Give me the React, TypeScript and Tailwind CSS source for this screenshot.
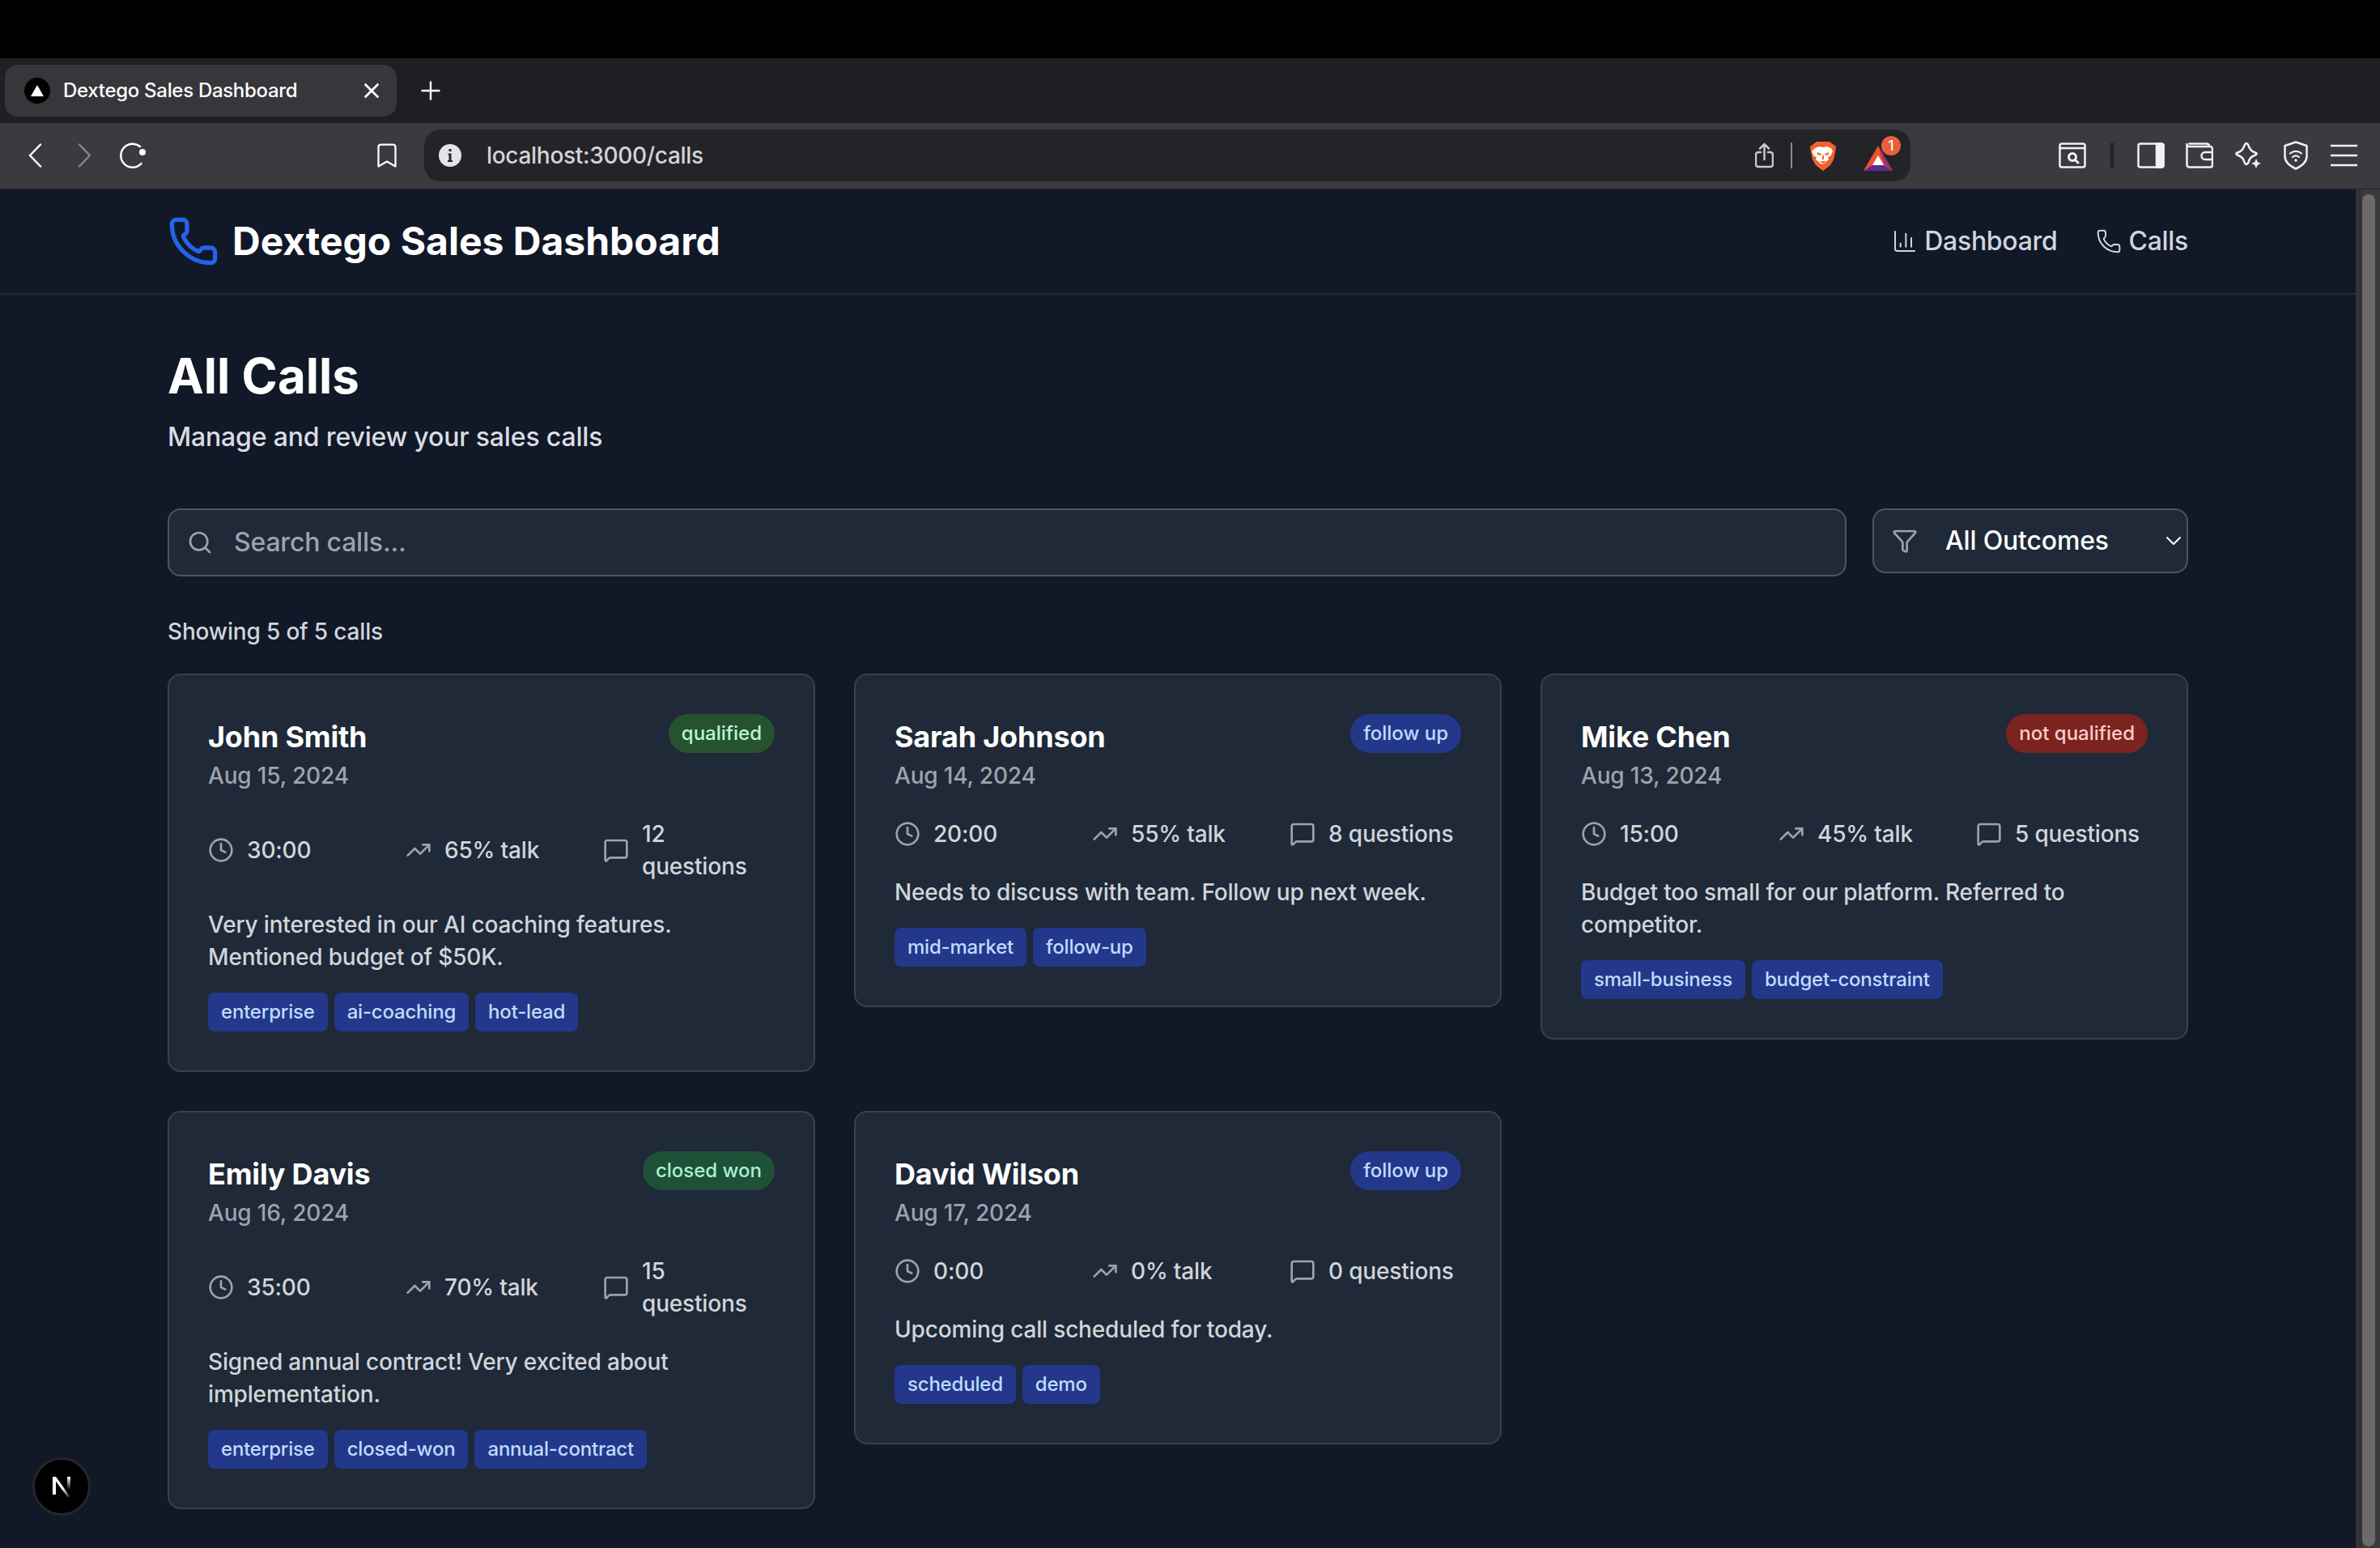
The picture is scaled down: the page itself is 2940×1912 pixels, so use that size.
import React from "react";
import { Phone, ChartColumn, Clock, TrendingUp, MessageSquare, Search, Filter, ChevronDown, X, Plus, Bookmark } from "lucide-react";

type Call = { name: string; date: string; badge: string; badgeCls: string; dur: string; talk: string; q: string; note: string; tags: string[] };

const BLUE = "bg-[#23388a] text-[#bfdbfe]";
const calls: Call[] = [
  { name: "John Smith", date: "Aug 15, 2024", badge: "qualified", badgeCls: "bg-[#265230] text-[#bbf7d0]", dur: "30:00", talk: "65% talk", q: "12 questions", note: "Very interested in our AI coaching features. Mentioned budget of $50K.", tags: ["enterprise", "ai-coaching", "hot-lead"] },
  { name: "Sarah Johnson", date: "Aug 14, 2024", badge: "follow up", badgeCls: BLUE, dur: "20:00", talk: "55% talk", q: "8 questions", note: "Needs to discuss with team. Follow up next week.", tags: ["mid-market", "follow-up"] },
  { name: "Mike Chen", date: "Aug 13, 2024", badge: "not qualified", badgeCls: "bg-[#7a2320] text-[#fecaca]", dur: "15:00", talk: "45% talk", q: "5 questions", note: "Budget too small for our platform. Referred to competitor.", tags: ["small-business", "budget-constraint"] },
  { name: "Emily Davis", date: "Aug 16, 2024", badge: "closed won", badgeCls: "bg-[#1f5038] text-[#a7f3d0]", dur: "35:00", talk: "70% talk", q: "15 questions", note: "Signed annual contract! Very excited about implementation.", tags: ["enterprise", "closed-won", "annual-contract"] },
  { name: "David Wilson", date: "Aug 17, 2024", badge: "follow up", badgeCls: BLUE, dur: "0:00", talk: "0% talk", q: "0 questions", note: "Upcoming call scheduled for today.", tags: ["scheduled", "demo"] },
];

function Card({ c }: { c: Call }) {
  return (
    <div className="w-[800px] rounded-[16px] border-2 border-[#374151] bg-[#1f2937] p-[48px]">
      <div className="mb-[32px] flex items-start justify-between">
        <div>
          <div className="text-[36px] leading-[56px] font-[650] tracking-[-0.2px] text-white">{c.name}</div>
          <div className="text-[28px] leading-[40px] font-[450] tracking-[-0.17px] text-[#9ca3af]">{c.date}</div>
        </div>
        <span className={`rounded-full px-[16px] py-[8px] text-[24px] leading-[32px] font-[550] ${c.badgeCls}`}>{c.badge}</span>
      </div>
      <div className="mb-[32px] grid grid-cols-3 gap-[32px] text-[28px] leading-[40px] font-[450] tracking-[-0.17px] text-[#d1d5db]">
        <div className="flex items-center gap-[16px]"><Clock className="h-[32px] w-[32px] shrink-0 text-[#9ca3af]" /><span>{c.dur}</span></div>
        <div className="flex items-center gap-[16px]"><TrendingUp className="h-[32px] w-[32px] shrink-0 text-[#9ca3af]" /><span>{c.talk}</span></div>
        <div className="flex items-center gap-[16px]"><MessageSquare className="h-[32px] w-[32px] shrink-0 text-[#9ca3af]" /><span>{c.q}</span></div>
      </div>
      <p className="mb-[24px] text-[28px] leading-[40px] font-[450] tracking-[-0.17px] text-[#d1d5db]">{c.note}</p>
      <div className="flex flex-wrap gap-[8px]">
        {c.tags.map((t) => (
          <span key={t} className={`rounded-[8px] px-[16px] py-[8px] text-[24px] leading-[32px] font-[450] tracking-[-0.2px] ${BLUE}`}>{t}</span>
        ))}
      </div>
    </div>
  );
}

function BraveLion() {
  return (
    <svg width="32" height="37" viewBox="0 0 32 37" className="block">
      <path d="M8 1h16l4 3 4 3-1 7-2 9-4 7-9 7-9-7-4-7-2-9-1-7 4-3z" fill="#f0632b" />
      <path d="M6 9l5-2 5 1 5-1 5 2 2 4-3 6-3 1 1 3-6 5-2 1-2-1-6-5 1-3-3-1-3-6z" fill="#fff" />
      <path d="M9 14l5 2-1 2-4-1zM23 14l-5 2 1 2 4-1zM12 25h8l-4 3zM15 18h2v5h-2z" fill="#f0632b" />
    </svg>
  );
}

function BatLogo() {
  return (
    <svg width="36" height="32" viewBox="0 0 36 32" className="absolute left-0 top-[8px] block">
      <path d="M18 0 36 31H0z" fill="#e8552f" />
      <path d="M18 0 36 31 26 24z" fill="#a32f6d" />
      <path d="M0 31 11 24h14l11 7z" fill="#5f2a8f" />
      <path d="M18 12l7 12H11z" fill="#fff" />
    </svg>
  );
}

const st = { fill: "none", stroke: "#f1f1f3", strokeWidth: 2.5, strokeLinejoin: "round" as const, strokeLinecap: "round" as const };

export default function App() {
  return (
    <div className="flex h-[1912px] w-[2940px] flex-col overflow-hidden bg-black font-['Inter',sans-serif]">
      <div className="h-[72px] shrink-0 bg-black" />
      {/* tab strip */}
      <div className="flex h-[80px] shrink-0 items-center bg-[#1f1f23] pl-[6px]">
        <div className="flex h-[64px] w-[484px] items-center rounded-[16px] bg-[#36363b] pl-[24px] pr-[16px]">
          <span className="flex h-[32px] w-[32px] items-center justify-center rounded-full bg-black">
            <svg width="16" height="14" viewBox="0 0 16 14"><path d="M8 0l8 14H0z" fill="#fff" /></svg>
          </span>
          <span className="ml-[16px] flex-1 text-[24px] leading-[32px] font-[450] tracking-[-0.3px] text-white">Dextego Sales Dashboard</span>
          <X className="h-[30px] w-[30px] text-white" strokeWidth={2.2} />
        </div>
        <Plus className="ml-[24px] h-[36px] w-[36px] text-white" strokeWidth={1.6} />
      </div>
      {/* toolbar */}
      <div className="flex h-[82px] shrink-0 items-center border-b-2 border-[#2e2e32] bg-[#3a3a3f]">
        <svg width="17" height="30" viewBox="0 0 17 30" className="ml-[35px] block" {...st} stroke="#fff"><path d="M15 1.500 2 15l13 13.500" /></svg>
        <svg width="17" height="30" viewBox="0 0 17 30" className="ml-[44px] block" {...st} stroke="#85858a"><path d="M2 1.500 15 15 2 28.500" /></svg>
        <svg width="34" height="34" viewBox="0 0 34 34" className="ml-[34px] block" {...st} stroke="#fff"><path d="M26 6A14.500 14.500 0 1 0 27.500 27" /><circle cx="29" cy="13" r="4" fill="#fff" stroke="none" /></svg>
        <Bookmark className="ml-[279px] h-[36px] w-[36px] text-white" strokeWidth={1.5} />
        <div className="ml-[28px] flex h-[64px] w-[1836px] items-center rounded-[20px] bg-[#242428] pl-[18px] pr-[22px]">
          <svg width="28" height="28" viewBox="0 0 28 28" className="block shrink-0">
            <circle cx="14" cy="14" r="14" fill="#e3e3e8" />
            <path d="M12.500 6h3v3h-3zM11.500 11.500h4V20h1.500v2h-6v-2h1.500v-6.500h-1z" fill="#242428" />
          </svg>
          <span className="ml-[31px] flex-1 text-[28px] leading-[36px] font-[450] tracking-[-0.3px] text-[#d4d4d8]">localhost:3000/calls</span>
          <svg width="23" height="32" viewBox="0 0 23 32" className="block" {...st} stroke="#c8c8cc"><path d="M7 12H4a3 3 0 0 0-3 3v12a3 3 0 0 0 3 3h15a3 3 0 0 0 3-3V15a3 3 0 0 0-3-3h-3" /><path d="M11.500 21V2M6 7.500 11.500 2 17 7.500" /></svg>
          <span className="ml-[21px] h-[32px] w-[2px] bg-[#8a8a8e]" />
          <span className="ml-[22px]"><BraveLion /></span>
          <span className="relative ml-[34px] h-[40px] w-[36px]">
            <BatLogo />
            <span className="absolute -right-[10px] -top-[4px] flex h-[24px] w-[24px] items-center justify-center rounded-full bg-[#e9603a] text-[17px] leading-[17px] font-medium text-white">1</span>
          </span>
        </div>
        <svg width="34" height="32" viewBox="0 0 34 32" className="ml-[183px] block" {...st}>
          <rect x="1.500" y="1.500" width="31" height="29" rx="2.500" /><path d="M1.500 7h31" /><circle cx="17" cy="18" r="4.500" strokeWidth="3" /><path d="M21 22l3 3" strokeWidth="3" />
        </svg>
        <span className="ml-[30px] h-[32px] w-[4px] rounded bg-[#232327]" />
        <svg width="34" height="32" viewBox="0 0 34 32" className="ml-[29px] block" {...st}>
          <rect x="1.500" y="1.500" width="31" height="29" rx="2.500" /><path d="M24 1.500h6a2.500 2.500 0 0 1 2.500 2.500v24a2.500 2.500 0 0 1-2.500 2.500h-6z" fill="#f1f1f3" />
        </svg>
        <svg width="34" height="32" viewBox="0 0 34 32" className="ml-[26px] block" {...st}>
          <path d="M4.500 1.500h21a4 4 0 0 1 4 3.500M1.500 5v22.500a3 3 0 0 0 3 3h26a2.500 2.500 0 0 0 2.500-2.500V8a3 3 0 0 0-3-3H4.500a3 3 0 0 1-3-3z" /><path d="M33 12H24a4.500 4.500 0 0 0 0 9h9" />
        </svg>
        <svg width="34" height="34" viewBox="0 0 34 34" className="ml-[26px] block" {...st}>
          <path d="M15 2c1.500 0 2 1.500 3 4 1.500 4 3.500 6 8 7.500 2 .8 2.500 1.800 0 3-4.500 1.500-7 3.500-8 7.500-1 2.500-1.500 4-3 4s-2-1.500-3-4c-1-4-3.500-6-8-7.500-2.500-1.200-2-2.200 0-3 4.500-1.500 6.500-3.500 8-7.500 1-2.500 1.500-4 3-4z" />
          <path d="M27 21l1.800 4.200 4.200 1.800-4.200 1.800L27 33l-1.800-4.200-4.200-1.800 4.200-1.800z" fill="#f1f1f3" stroke="none" />
        </svg>
        <svg width="30" height="36" viewBox="0 0 30 36" className="ml-[27px] block" {...st}>
          <path d="M15 1.500 28.500 6v13c0 7-6 12-13.500 15.500C7.500 31 1.500 26 1.500 19V6z" /><path d="M8 15.500c4-3.500 10-3.500 14 0M11 20c2.500-2 5.500-2 8 0" strokeWidth="2.200" /><circle cx="15" cy="24" r="1.800" fill="#f1f1f3" stroke="none" />
        </svg>
        <svg width="33" height="28" viewBox="0 0 33 28" className="ml-[28px] block" {...st} strokeLinecap="butt"><path d="M0 2h33M0 14h33M0 26h33" /></svg>
      </div>
      {/* page */}
      <div className="flex min-h-0 flex-1">
        <div className="relative min-w-0 flex-1 overflow-hidden bg-[#111827] text-white">
          <header className="border-b-2 border-[#1f2937]">
            <div className="ml-[207px] flex h-[128px] w-[2496px] items-center justify-between">
              <div className="flex items-center gap-[16px]">
                <Phone className="h-[64px] w-[64px] text-[#2563eb]" />
                <span className="text-[48px] leading-[64px] font-bold text-white">Dextego Sales Dashboard</span>
              </div>
              <nav className="flex items-center gap-[48px] text-[32px] leading-[48px] font-[450] tracking-[-0.3px] text-[#d1d5db]">
                <span className="flex items-center gap-[8px]"><ChartColumn className="h-[32px] w-[32px]" strokeWidth={1.5} />Dashboard</span>
                <span className="flex items-center gap-[8px]"><Phone className="h-[32px] w-[32px]" strokeWidth={1.5} />Calls</span>
              </nav>
            </div>
          </header>
          <main className="ml-[207px] w-[2496px] pt-[64px]">
            <h1 className="text-[60px] leading-[72px] font-bold text-white">All Calls</h1>
            <p className="mt-[16px] text-[32px] leading-[48px] font-[450] tracking-[-0.17px] text-[#d9dde3]">Manage and review your sales calls</p>
            <div className="mt-[64px] flex items-start gap-[32px]">
              <div className="flex h-[84px] flex-1 items-center rounded-[16px] border-2 border-[#4b5563] bg-[#1f2937] pl-[22px]">
                <Search className="h-[32px] w-[32px] text-[#9ca3af]" />
                <span className="ml-[26px] text-[32px] leading-[48px] font-[450] tracking-[-0.2px] text-[#9ca3af]">Search calls...</span>
              </div>
              <div className="flex h-[80px] w-[390px] items-center rounded-[16px] border-2 border-[#4b5563] bg-[#1f2937] pl-[22px]">
                <Filter className="h-[32px] w-[32px] text-[#9ca3af]" />
                <span className="ml-[34px] flex-1 text-[32px] leading-[48px] font-[450] tracking-[-0.17px] text-white">All Outcomes</span>
                <ChevronDown className="h-[32px] w-[32px] text-white" strokeWidth={1.5} />
              </div>
            </div>
            <div className="mt-[48px] mb-[32px] text-[28px] leading-[40px] font-[450] tracking-[-0.17px] text-[#d1d5db]">Showing 5 of 5 calls</div>
            <div className="grid grid-cols-3 items-start gap-[48px]">
              {calls.map((c) => <Card key={c.name} c={c} />)}
            </div>
          </main>
          <div className="absolute left-[40px] top-[1566px] flex h-[72px] w-[72px] items-center justify-center rounded-full border-[3px] border-[#26262a] bg-black">
            <svg width="30" height="30" viewBox="0 0 30 30">
              <defs>
                <linearGradient id="n1" x1="0" y1="0" x2="1" y2="1"><stop offset="0.55" stopColor="#fff" /><stop offset="1" stopColor="#fff" stopOpacity="0" /></linearGradient>
                <linearGradient id="n2" x1="0" y1="0" x2="0" y2="1"><stop offset="0" stopColor="#fff" /><stop offset="0.8" stopColor="#fff" stopOpacity="0" /></linearGradient>
              </defs>
              <path d="M4 3h4v22H4z" fill="#fff" />
              <path d="M4 3h4l18 25-3 1z" fill="url(#n1)" />
              <path d="M22 3h4v20h-4z" fill="url(#n2)" />
            </svg>
          </div>
        </div>
        <div className="flex w-[30px] shrink-0 border-l-[8px] border-[#333335] bg-[#3a3a3a] pl-0 pt-[6px]">
          <div className="h-[1670px] w-[16px] rounded-full bg-[#6b6b6b]" />
        </div>
      </div>
    </div>
  );
}
